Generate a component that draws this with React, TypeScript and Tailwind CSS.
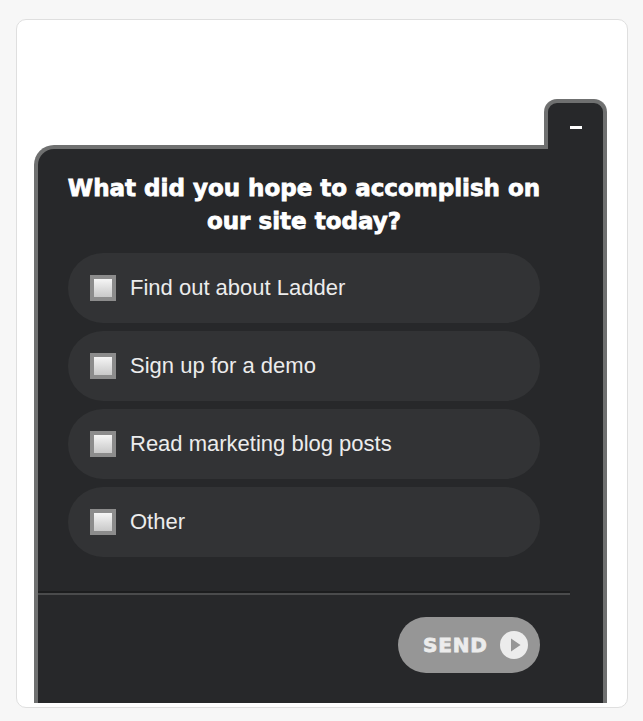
import React, { useState } from 'react';

const options = [
  'Find out about Ladder',
  'Sign up for a demo',
  'Read marketing blog posts',
  'Other'
];

const PlayCircle: React.FC = () => (
  <svg width="28" height="28" viewBox="0 0 28 28" aria-hidden="true">
    <circle cx="14" cy="14" r="14" fill="#ececec" />
    <path d="M11 7.5 L20.5 14 L11 20.5 Z" fill="#969696" />
  </svg>
);

export default function App() {
  const [checked, setChecked] = useState<boolean[]>(options.map(() => false));

  const toggle = (i: number) => {
    setChecked((prev) => prev.map((v, idx) => (idx === i ? !v : v)));
  };

  return (
    <div className="min-h-[721px] w-full bg-[#f7f7f7] pl-[16px] pt-[19px] pr-[15px] pb-[13px]">
      <div className="h-[689px] w-[612px] overflow-hidden rounded-[10px] border border-[#dfdfdf] bg-white pl-[17px] pr-[19px] pt-[79px]">
        <div className="flex w-[573px] flex-col">
          {/* minimise tab */}
          <div className="relative z-10 -mb-[4px] flex h-[50px] w-[63px] justify-center self-end rounded-t-[13px] border-4 border-b-0 border-[#6f7070] bg-[#27282a]">
            <button className="mt-[23px] h-[3px] w-[12px] bg-white" aria-label="minimise" />
          </div>

          {/* main panel */}
          <div className="h-[558px] rounded-tl-[20px] border-4 border-b-0 border-[#6f7070] bg-[#27282a]">
            <div className="flex w-[532px] flex-col">
              <h2 className="pt-[23px] text-center font-['DejaVu_Sans',sans-serif] text-[23px] leading-[33px] font-bold text-white [-webkit-text-stroke:0.8px_white]">
                What did you hope to accomplish on
                <br />
                our site today?
              </h2>

              <div className="mt-[15px] flex flex-col gap-[8px] px-[30px]">
                {options.map((label, i) => (
                  <label
                    key={label}
                    onClick={() => toggle(i)}
                    className="flex h-[70px] cursor-pointer items-center rounded-full bg-[#323335] pl-[22px]"
                  >
                    <span className="flex h-[26px] w-[26px] shrink-0 items-center justify-center bg-[#8c8c8c]">
                      <span className="h-[18px] w-[18px] bg-[linear-gradient(180deg,#f6f6f6_0%,#dcdcdc_55%,#c9c9c9_100%)]">
                        {checked[i] && (
                          <svg viewBox="0 0 18 18" className="h-[18px] w-[18px]">
                            <path d="M4 9.5 L7.5 13 L14 5" stroke="#333" strokeWidth="2.5" fill="none" />
                          </svg>
                        )}
                      </span>
                    </span>
                    <span className="ml-[14px] -mt-[2px] font-['Liberation_Sans',Arial,sans-serif] text-[22px] text-[#ececec]">
                      {label}
                    </span>
                  </label>
                ))}
              </div>

              <div className="mt-[34px] h-[4px] border-t-2 border-b-2 border-t-[#1c1d1e] border-b-[#4a4b4c]" />

              <div className="flex justify-end px-[30px] pt-[22px]">
                <button className="flex h-[56px] w-[142px] items-center gap-[12px] rounded-full bg-[#969696] pl-[25px]">
                  <span className="font-['DejaVu_Sans',sans-serif] text-[20px] font-bold tracking-[0.8px] text-[#ececec] [-webkit-text-stroke:0.8px_#ececec]">
                    SEND
                  </span>
                  <PlayCircle />
                </button>
              </div>
            </div>
          </div>
        </div>
      </div>
    </div>
  );
}
